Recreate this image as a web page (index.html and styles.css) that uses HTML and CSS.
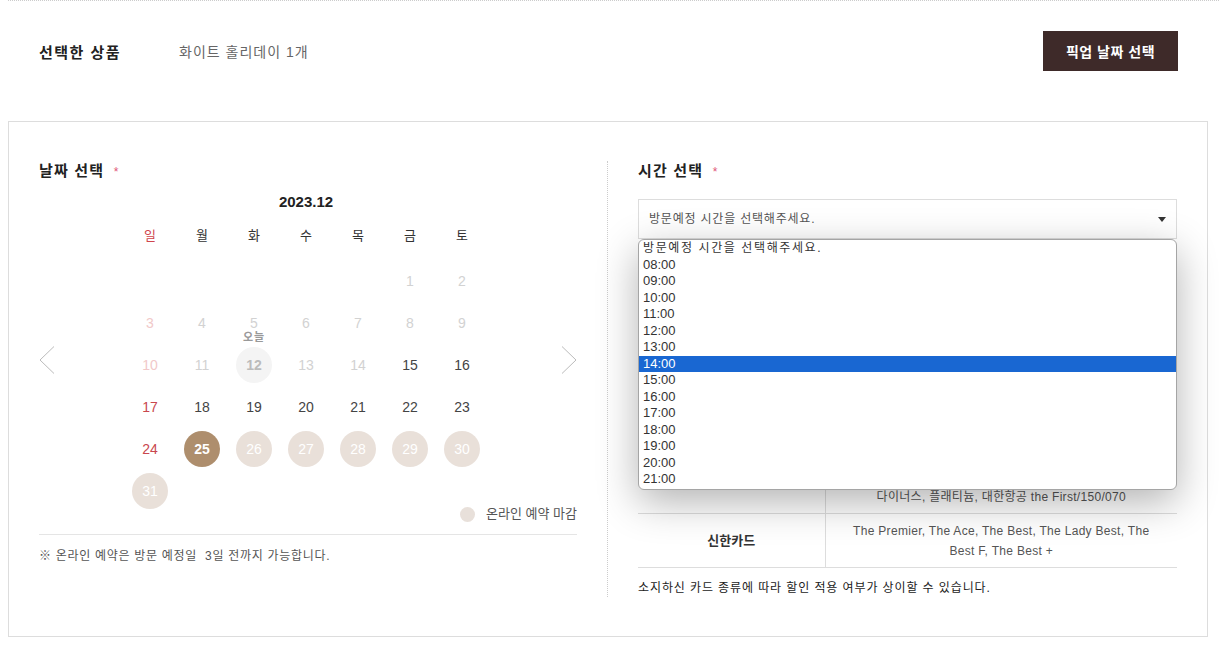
FILE: index.html
```html
<!DOCTYPE html>
<html lang="ko">
<head>
  <meta charset="UTF-8">
  <meta name="viewport" content="width=device-width, initial-scale=1.0">
  <title>픽업 날짜 선택</title>
  <link rel="stylesheet" href="styles.css">
</head>
<body>
<div class="wrap">
  <!-- 선택한 상품 -->
  <div class="picked">
    <div class="picked-info">
      <strong class="picked-label">선택한 상품</strong>
      <span class="picked-name">화이트 홀리데이 1개</span>
    </div>
    <button class="btn-pickup">픽업 날짜 선택</button>
  </div>

  <div class="reserve">
    <!-- 날짜 선택 -->
    <div class="col col-date">
      <h3 class="col-title">날짜 선택 <span class="req">*</span></h3>
      <div class="calendar">
        <button class="cal-nav prev">
          <svg width="16" height="28" viewBox="0 0 16 28"><path d="M15 0.5 L1 14 L15 27.5" fill="none" stroke="#bbb" stroke-width="1"/></svg>
        </button>
        <div class="cal-body">
          <div class="cal-month">2023.12</div>
          <ul class="cal-week">
            <li class="sun">일</li><li>월</li><li>화</li><li>수</li><li>목</li><li>금</li><li>토</li>
          </ul>
          <ul class="cal-days">
            <li></li><li></li><li></li><li></li><li></li>
            <li class="off"><span>1</span></li>
            <li class="off"><span>2</span></li>
            <li class="off sun"><span>3</span></li>
            <li class="off"><span>4</span></li>
            <li class="off"><span>5</span></li>
            <li class="off"><span>6</span></li>
            <li class="off"><span>7</span></li>
            <li class="off"><span>8</span></li>
            <li class="off"><span>9</span></li>
            <li class="off sun"><span>10</span></li>
            <li class="off"><span>11</span></li>
            <li class="today"><em>오늘</em><span>12</span></li>
            <li class="off"><span>13</span></li>
            <li class="off"><span>14</span></li>
            <li><span>15</span></li>
            <li><span>16</span></li>
            <li class="sun"><span>17</span></li>
            <li><span>18</span></li>
            <li><span>19</span></li>
            <li><span>20</span></li>
            <li><span>21</span></li>
            <li><span>22</span></li>
            <li><span>23</span></li>
            <li class="sun"><span>24</span></li>
            <li class="selected"><span>25</span></li>
            <li class="closed"><span>26</span></li>
            <li class="closed"><span>27</span></li>
            <li class="closed"><span>28</span></li>
            <li class="closed"><span>29</span></li>
            <li class="closed"><span>30</span></li>
            <li class="closed"><span>31</span></li>
          </ul>
        </div>
        <button class="cal-nav next">
          <svg width="16" height="28" viewBox="0 0 16 28"><path d="M1 0.5 L15 14 L1 27.5" fill="none" stroke="#bbb" stroke-width="1"/></svg>
        </button>
      </div>
      <div class="legend"><span class="dot"></span>온라인 예약 마감</div>
      <p class="date-note">※ 온라인 예약은 방문 예정일&nbsp; 3일 전까지 가능합니다.</p>
    </div>

    <!-- 시간 선택 -->
    <div class="col col-time">
      <h3 class="col-title">시간 선택 <span class="req">*</span></h3>
      <div class="time-select">
        <div class="select-box">방문예정 시간을 선택해주세요.<span class="caret"></span></div>
        <ul class="select-list">
          <li class="ph">방문예정 시간을 선택해주세요.</li>
          <li>08:00</li>
          <li>09:00</li>
          <li>10:00</li>
          <li>11:00</li>
          <li>12:00</li>
          <li>13:00</li>
          <li class="on">14:00</li>
          <li>15:00</li>
          <li>16:00</li>
          <li>17:00</li>
          <li>18:00</li>
          <li>19:00</li>
          <li>20:00</li>
          <li>21:00</li>
        </ul>
      </div>
      <table class="card-table">
        <tr>
          <th>삼성카드</th>
          <td>THE iD. 1st, THE iD. PLATINUM,<br>taptap O, 삼성카드 4 V2</td>
        </tr>
        <tr>
          <th>KB국민카드</th>
          <td>탄탄대로 올쇼핑 티타늄, Easy all 티타늄,<br>청춘대로 톡톡카드</td>
        </tr>
        <tr>
          <th>하나카드</th>
          <td>1Q Daily+, 1Q Shopping,<br>MULTI Any, MULTI Living</td>
        </tr>
        <tr>
          <th>현대카드</th>
          <td>the Black, the Purple, the Red, the Green,<br>the Pink, 현대카드 ZERO Edition2,<br>다이너스, 플래티늄, 대한항공 the First/150/070</td>
        </tr>
        <tr>
          <th>신한카드</th>
          <td>The Premier, The Ace, The Best, The Lady Best, The<br>Best F, The Best +</td>
        </tr>
      </table>
      <p class="card-note">소지하신 카드 종류에 따라 할인 적용 여부가 상이할 수 있습니다.</p>
    </div>
  </div>
</div>
</body>
</html>
```

FILE: styles.css
```css
* {
  box-sizing: border-box;
}

body {
  margin: 0;
  background-color: #ffffff;
  font-family: "Liberation Sans", "Noto Sans CJK KR", sans-serif;
  color: #222;
}

ul {
  list-style: none;
  margin: 0;
  padding: 0;
}

.wrap {
  padding-left: 8px;
}

/* 선택한 상품 */
.picked {
  display: flex;
  justify-content: space-between;
  align-items: center;
  border-top: 1px dotted #ccc;
  padding: 30px 41px 0 31px;
}

.picked-info {
  display: flex;
  align-items: center;
}

.picked-label {
  width: 140px;
  font-size: 15px;
  font-weight: bold;
  letter-spacing: 1.5px;
  color: #222;
}

.picked-name {
  font-size: 14px;
  letter-spacing: 1px;
  color: #666;
}

.btn-pickup {
  width: 135px;
  height: 40px;
  border: none;
  background-color: #3e2a29;
  color: #fff;
  font: bold 14px "Liberation Sans", "Noto Sans CJK KR", sans-serif;
  letter-spacing: 0.5px;
  cursor: pointer;
}

/* 예약 박스 */
.reserve {
  display: flex;
  margin: 50px 11px 0 0;
  border: 1px solid #ddd;
  padding: 39px 30px;
}

.col-date {
  flex: 0 0 568px;
  padding-right: 30px;
}

.col-time {
  flex: 1;
  border-left: 1px dotted #ccc;
  padding-left: 30px;
}

.col-title {
  margin: 0;
  font-size: 15px;
  line-height: 20px;
  font-weight: bold;
  letter-spacing: 1.2px;
  color: #222;
}

.req {
  margin-left: 4px;
  font-size: 12px;
  font-weight: normal;
  color: #e0577a;
}

/* 달력 */
.calendar {
  display: flex;
  justify-content: space-between;
  margin-top: 11px;
}

.cal-nav {
  align-self: flex-start;
  margin-top: 153px;
  padding: 0;
  border: none;
  background: none;
  cursor: pointer;
}

.cal-nav svg {
  display: block;
}

.cal-nav.next {
  width: 20px;
  display: flex;
  justify-content: flex-end;
}

.cal-body {
  width: 364px;
}

.cal-month {
  text-align: center;
  font-size: 15px;
  font-weight: bold;
  line-height: 18px;
  color: #222;
}

.cal-week,
.cal-days {
  display: grid;
  grid-template-columns: repeat(7, 52px);
}

.cal-week {
  margin-top: 15px;
  font-size: 13px;
  line-height: 20px;
  text-align: center;
  color: #333;
}

.cal-week .sun {
  color: #d0454c;
}

.cal-days {
  grid-auto-rows: 36px;
  row-gap: 6px;
  margin-top: 17px;
}

.cal-days li {
  position: relative;
  display: flex;
  justify-content: center;
  align-items: center;
  font-size: 14px;
  color: #444;
}

.cal-days span {
  display: flex;
  justify-content: center;
  align-items: center;
  width: 36px;
  height: 36px;
  border-radius: 50%;
}

.cal-days .sun {
  color: #c9474e;
}

.cal-days .off {
  color: #d2d2d2;
}

.cal-days .off.sun {
  color: #f1c9c9;
}

.cal-days .today span {
  background-color: #f4f4f4;
  color: #bbb;
  font-weight: bold;
}

.cal-days .today em {
  position: absolute;
  top: -16px;
  left: 0;
  right: 0;
  text-align: center;
  font-style: normal;
  font-size: 11px;
  line-height: 12px;
  font-weight: bold;
  letter-spacing: 1px;
  color: #999;
}

.cal-days .selected span {
  background-color: #ae8e6d;
  color: #fff;
  font-weight: bold;
}

.cal-days .closed span {
  background-color: #e9e0d9;
  color: #fff;
}

.legend {
  display: flex;
  justify-content: flex-end;
  align-items: center;
  gap: 11px;
  height: 14px;
  margin-top: -2px;
  font-size: 13px;
  line-height: 14px;
  color: #555;
}

.legend .dot {
  width: 15px;
  height: 15px;
  border-radius: 50%;
  background-color: #e8e0da;
}

.date-note {
  margin: 13px 0 0;
  padding-top: 12px;
  border-top: 1px solid #e5e5e5;
  font-size: 12px;
  line-height: 18px;
  letter-spacing: 0.7px;
  color: #555;
}

/* 시간 선택 */
.time-select {
  position: relative;
  margin-top: 17px;
}

.select-box {
  position: relative;
  height: 40px;
  padding: 0 10px;
  border: 1px solid #ddd;
  font-size: 12px;
  line-height: 38px;
  letter-spacing: 0.8px;
  color: #555;
}

.caret {
  position: absolute;
  right: 10px;
  top: 17px;
  border-left: 4px solid transparent;
  border-right: 4px solid transparent;
  border-top: 5px solid #333;
}

.select-list {
  position: absolute;
  top: 40px;
  left: 0;
  right: 0;
  z-index: 2;
  padding-bottom: 1px;
  background-color: #fff;
  border: 1px solid #a5a5a5;
  border-radius: 6px;
  box-shadow: 0 12px 40px rgba(0, 0, 0, 0.3);
  font-size: 13px;
  line-height: 16.5px;
  color: #333;
}

.select-list li {
  padding-left: 4px;
}

.select-list .ph {
  font-size: 12px;
  letter-spacing: 1.6px;
}

.select-list .on {
  background-color: #1967d2;
  color: #fff;
}

/* 카드 안내 */
.card-table {
  width: 100%;
  margin-top: 38px;
  border-collapse: collapse;
  border-top: 1px solid #ccc;
  border-bottom: 1px solid #ccc;
}

.card-table th,
.card-table td {
  padding: 7px 10px 6px;
  border-bottom: 1px solid #ddd;
  font-size: 12px;
  line-height: 20px;
  text-align: center;
  color: #555;
}

.card-table td {
  letter-spacing: 0.3px;
}

.card-table th {
  width: 187px;
  border-right: 1px solid #ddd;
  font-size: 13px;
  font-weight: bold;
  color: #333;
}

.card-note {
  margin: 11px 0 0;
  font-size: 12px;
  line-height: 18px;
  letter-spacing: 0.9px;
  color: #222;
}
```
